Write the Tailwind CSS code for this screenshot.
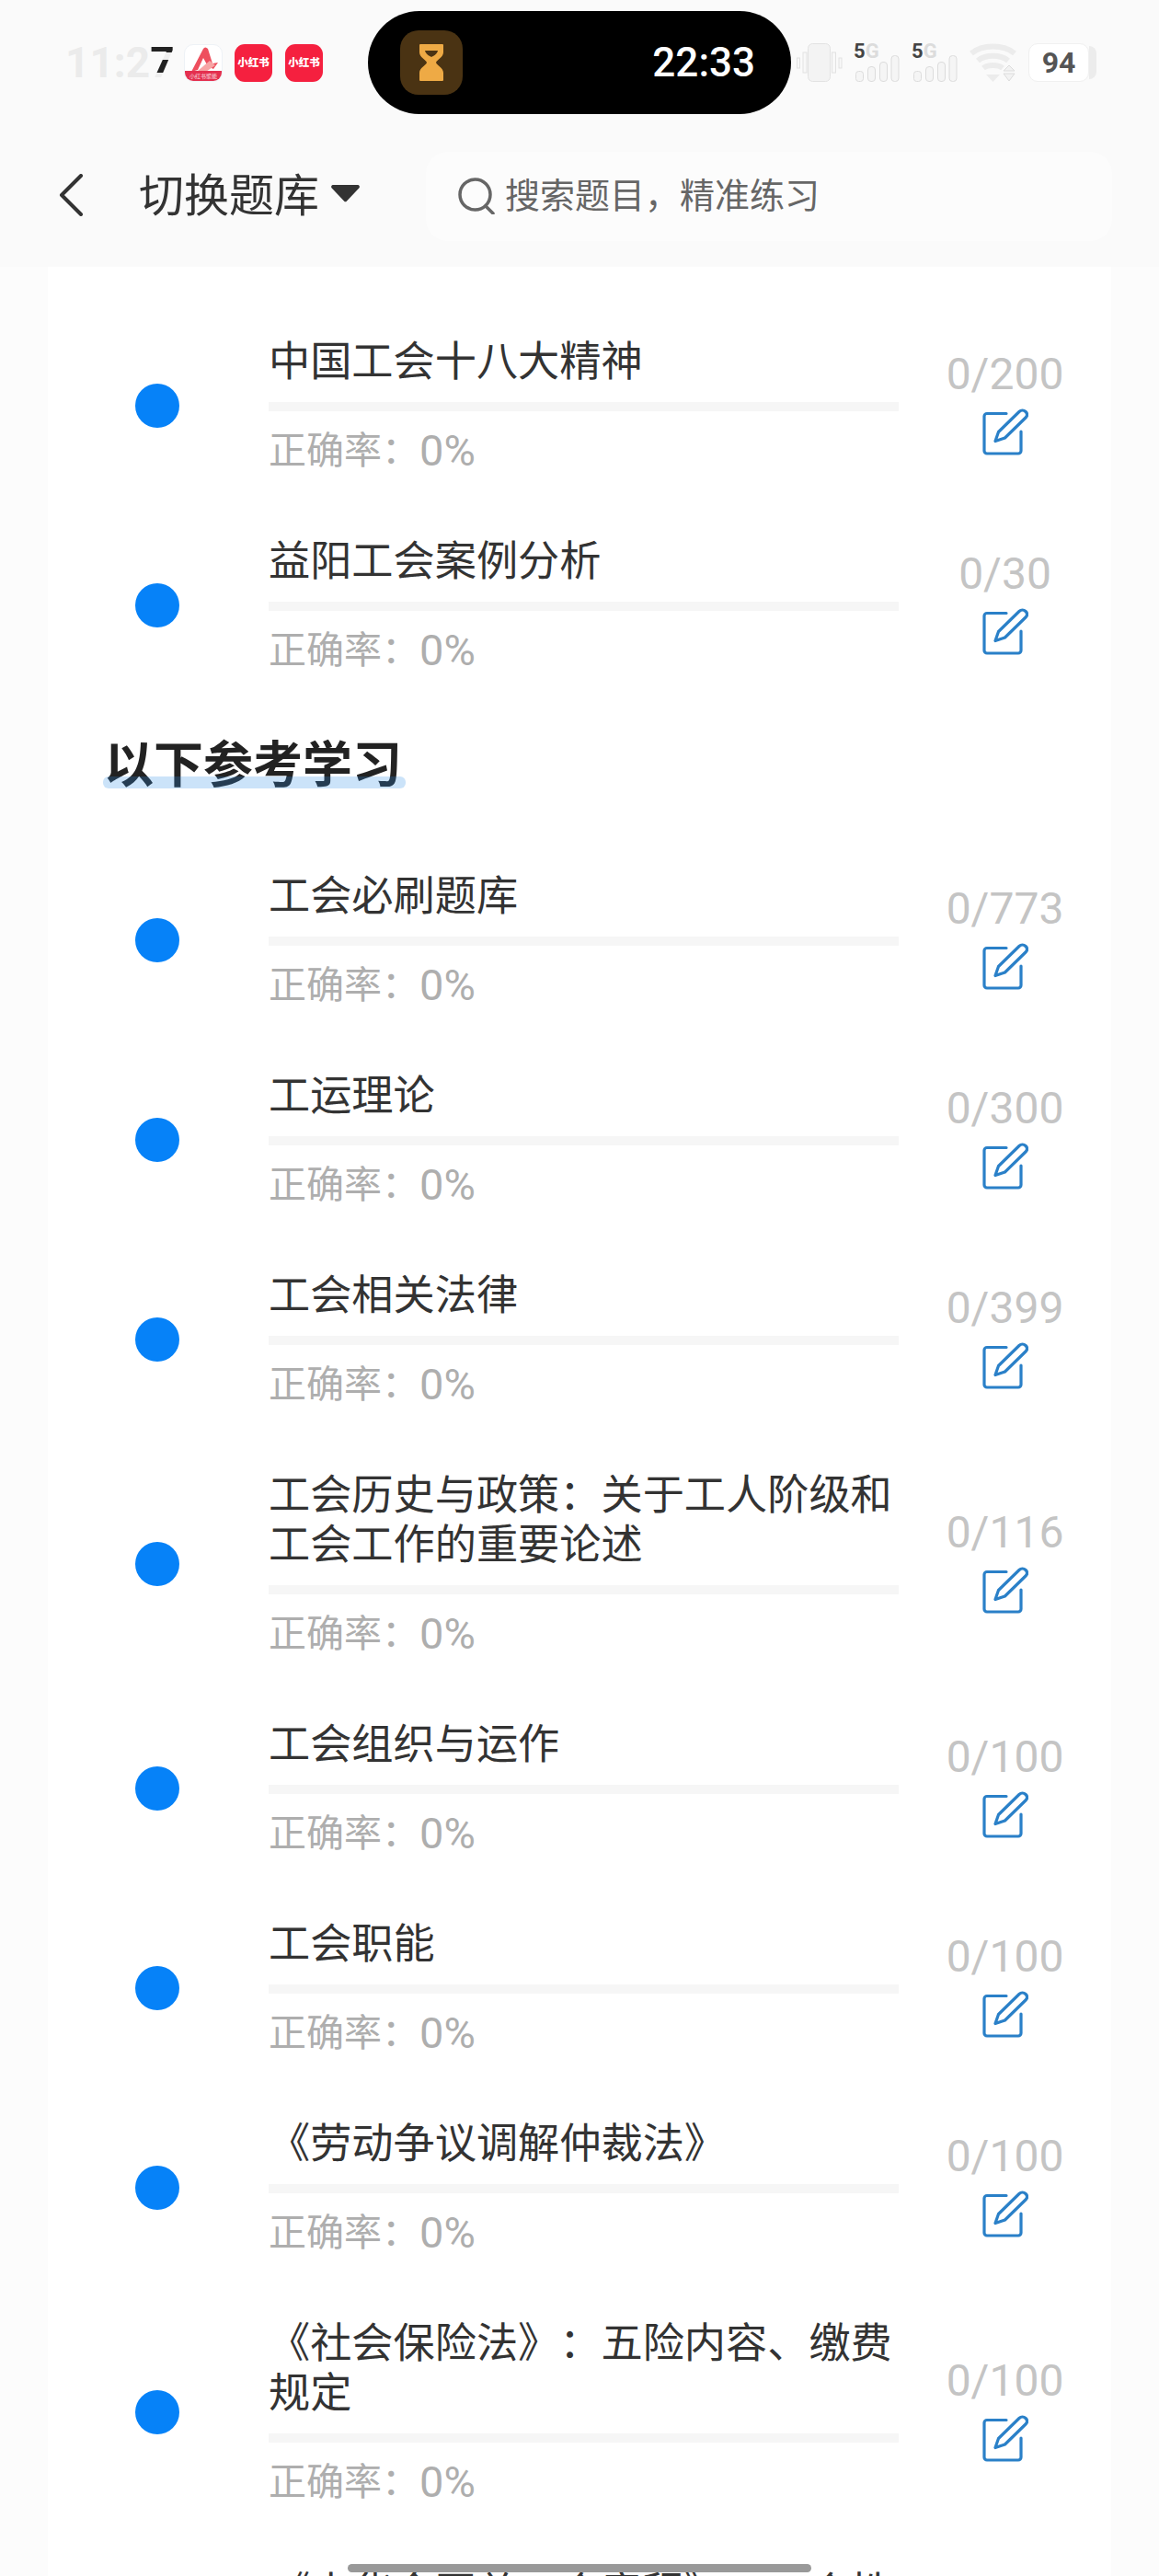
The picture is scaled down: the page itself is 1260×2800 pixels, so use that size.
<!DOCTYPE html>
<html lang="zh-CN">
<head>
<meta charset="UTF-8">
<meta name="viewport" content="width=device-width, initial-scale=1.0">
<title>切换题库</title>
<script src="https://cdn.jsdelivr.net/npm/@tailwindcss/browser@4"></script>
</head>
<body class="bg-[#fcfcfc] font-['Roboto','Noto_Sans_CJK_SC',sans-serif] [text-spacing-trim:space-all]">
<div class="relative w-[1260px] h-[2800px] overflow-hidden">

  <!-- Top: status bar + nav -->
  <header class="h-[290px] bg-[#fafafa] flex flex-col">
    <div class="h-[136px] flex items-center pl-[71px]">
      <div class="w-[109px] text-[46px] leading-none font-bold whitespace-nowrap text-[#ebebeb]">11:2<span class="bg-[linear-gradient(180deg,#222_0%,#222_30%,#eee_30%,#eee_45%,#222_45%,#222_70%,#eee_70%,#eee_85%,#222_85%)] bg-clip-text text-transparent">7</span></div>
      <!-- app icons -->
      <div class="ml-[20px] w-[42px] h-[41px] rounded-[10px] bg-white relative overflow-hidden flex flex-col justify-end border border-[#eef2f6]">
        <svg viewBox="0 0 42 41" class="absolute inset-0 w-[42px] h-[41px]"><path d="M7 29 L20 4 Q22 1 25 4 L30 20 L36 19 L31 26 L25 23 L20 14 L14 27 Z" fill="#ee4f5e"/><path d="M14 28 L27 17 L33 22 L20 31 Z" fill="#f7a5a5"/></svg>
        <div class="relative h-[11px] bg-[#e4304f] text-white/80 text-[6px] leading-[11px] text-center whitespace-nowrap">小红书聚能</div>
      </div>
      <div class="ml-[13px] w-[41px] h-[41px] rounded-[11px] bg-[#f5203f] text-white text-[11.5px] font-black leading-[41px] text-center whitespace-nowrap">小红书</div>
      <div class="ml-[14px] w-[41px] h-[41px] rounded-[11px] bg-[#f5203f] text-white text-[11.5px] font-black leading-[41px] text-center whitespace-nowrap">小红书</div>
      <!-- pill -->
      <div class="ml-[49px] w-[460px] h-[112px] rounded-full bg-black flex items-center pl-[35px] pr-[39px] justify-between">
        <div class="w-[68px] h-[70px] rounded-[20px] bg-[#4a3313] flex items-center justify-center">
          <svg viewBox="0 0 26 40" class="w-[26px] h-[40px]"><path d="M1 0 H25 a1 1 0 0 1 1 1 V9 C26 14 19 17 18 20 C19 23 26 26 26 31 V39 a1 1 0 0 1 -1 1 H1 a1 1 0 0 1 -1 -1 V31 C0 26 7 23 8 20 C7 17 0 14 0 9 V1 a1 1 0 0 1 1 -1 Z" fill="#eeaa45"/><path d="M6 7 H20 C19 11 15 13 13 14 C11 13 7 11 6 7 Z" fill="#4a3313"/></svg>
        </div>
        <div class="text-white text-[44px] font-medium leading-none">22:33</div>
      </div>
      <!-- vibrate -->
      <svg viewBox="0 0 50 42" class="ml-[6px] w-[50px] h-[42px]"><rect x="12.5" y="0.5" width="24" height="41" rx="5" fill="#f3f3f3" stroke="#e2e2e2"/><rect x="7" y="10" width="4" height="22" fill="#f8f8f8" stroke="#e2e2e2"/><rect x="38.5" y="10" width="4" height="22" fill="#f8f8f8" stroke="#e2e2e2"/><rect x="0.5" y="16" width="3" height="11" fill="#f8f8f8" stroke="#e2e2e2"/><rect x="46" y="16" width="3" height="11" fill="#f8f8f8" stroke="#e2e2e2"/></svg>
      <!-- signal 1 -->
      <div class="ml-[12px] relative w-[50px] h-[42px]">
        <svg viewBox="0 0 50 42" class="w-[50px] h-[42px]"><g fill="#f5f5f5" stroke="#dcdcdc"><rect x="2.5" y="30.5" width="8" height="11" rx="3"/><rect x="15.5" y="25.5" width="8" height="16" rx="3.5"/><rect x="28.5" y="20.5" width="8" height="21" rx="3.5"/><rect x="41" y="13.5" width="8" height="28" rx="3.5"/></g></svg>
        <div class="absolute left-0 top-0 text-[22px] leading-[18px] font-bold text-[#dcdcdc]"><span class="text-[#444]">5</span>G</div>
      </div>
      <!-- signal 2 -->
      <div class="ml-[13px] relative w-[50px] h-[42px]">
        <svg viewBox="0 0 50 42" class="w-[50px] h-[42px]"><g fill="#f5f5f5" stroke="#dcdcdc"><rect x="2.5" y="30.5" width="8" height="11" rx="3"/><rect x="15.5" y="25.5" width="8" height="16" rx="3.5"/><rect x="28.5" y="20.5" width="8" height="21" rx="3.5"/><rect x="41" y="13.5" width="8" height="28" rx="3.5"/></g></svg>
        <div class="absolute left-0 top-0 text-[22px] leading-[18px] font-bold text-[#dcdcdc]"><span class="text-[#444]">5</span>G</div>
      </div>
      <!-- wifi -->
      <svg viewBox="0 0 54 42" class="ml-[12px] w-[54px] h-[42px]"><g fill="none" stroke="#ececec" stroke-width="6"><path d="M3 11 C15 1 38 1 50 11"/><path d="M10 19 C18 12 35 12 43 19"/><path d="M16 27 C21 23 32 23 37 27"/></g><path d="M19 34 H34 L26.5 42 Z" fill="#ececec"/><path d="M38 30 L44 24 L50 30 Z" fill="#f2f2f2" stroke="#dcdcdc"/><path d="M38 33 H50 L44 41 Z" fill="#f2f2f2" stroke="#dcdcdc"/></svg>
      <!-- battery -->
      <div class="ml-[11px] flex items-center">
        <div class="w-[66px] h-[42px] bg-white rounded-[10px] border border-[#f0f0f0] flex items-center justify-center text-[32px] leading-none font-bold text-[#555]">94</div>
        <div class="w-[8px] h-[36px] bg-[#ececec] rounded-r-full"></div>
      </div>
    </div>

    <nav class="h-[154px] flex items-center pl-[64px]">
      <svg viewBox="0 0 26 46" class="w-[26px] h-[46px] -mt-[3px]"><path d="M24 2 L3 23 L24 44" fill="none" stroke="#333" stroke-width="4" stroke-linecap="round" stroke-linejoin="round"/></svg>
      <div class="ml-[61px] w-[195px] text-[49px] leading-none text-[#333] whitespace-nowrap">切换题库</div>
      <svg viewBox="0 0 33 20" class="ml-[13px] w-[33px] h-[20px] -mt-[6px]"><path d="M3 1 H30 a2 2 0 0 1 1.5 3.2 L18 18.5 a2 2 0 0 1 -3 0 L1.5 4.2 A2 2 0 0 1 3 1 Z" fill="#333"/></svg>
      <div class="ml-[71px] w-[746px] h-[97px] rounded-[24px] bg-[#fcfcfc] flex items-center pl-[35px]">
        <svg viewBox="0 0 40 40" class="w-[40px] h-[40px]"><circle cx="18.5" cy="18.5" r="16.5" fill="none" stroke="#666" stroke-width="3.5"/><path d="M30 31 L38 39" stroke="#666" stroke-width="3.5" stroke-linecap="round"/></svg>
        <span class="ml-[11px] text-[38px] leading-none text-[#666] whitespace-nowrap">搜索题目，精准练习</span>
      </div>
    </nav>
  </header>

  <!-- Card -->
  <main class="ml-[52px] w-[1156px] bg-white pt-[42px]">
    <div id="top-rows"></div>
    <div class="h-[147px] pl-[61px] pt-[37px]">
      <div class="relative inline-block text-[54px] leading-[60px] font-bold text-[#222]">以下参考学习
        <span class="absolute -left-[1px] -right-[4px] top-[41px] h-[13px] rounded-md bg-[#2f8fe8]/25"></span>
      </div>
    </div>
    <div id="rows"></div>
  </main>

  <!-- Home bar over the content -->
  <div class="absolute left-[378px] top-[2787px] w-[504px] h-[9px] rounded-full bg-[#999]"></div>
</div>

<script>
const topRows = [
  { title: "中国工会十八大精神", total: 200 },
  { title: "益阳工会案例分析", total: 30 },
];
const rows = [
  { title: "工会必刷题库", total: 773 },
  { title: "工运理论", total: 300 },
  { title: "工会相关法律", total: 399 },
  { title: "工会历史与政策：关于工人阶级和工会工作的重要论述", total: 116 },
  { title: "工会组织与运作", total: 100 },
  { title: "工会职能", total: 100 },
  { title: "《劳动争议调解仲裁法》", total: 100 },
  { title: "《社会保险法》：五险内容、缴费规定", total: 100 },
  { title: "《中华全国总工会章程》：工会性质与基本任务", total: 100 },
];

function rowHtml(r) {
  return `
    <div class="flex items-center pl-[95px]">
      <div class="w-[48px] h-[48px] rounded-full bg-[#0682f8] shrink-0"></div>
      <div class="ml-[97px] w-[685px] shrink-0 pt-[35px] pb-[32px]">
        <div class="text-[45.2px] leading-[54px] text-[#333]">${r.title}</div>
        <div class="mt-[16px] h-[10px] bg-[#f6f6f6]"></div>
        <div class="mt-[16px] h-[54px] flex items-center text-[41px] leading-[54px] text-[#aeaeae]">正确率：<span class="text-[47px] leading-[54px]">0%</span></div>
      </div>
      <div class="flex-1 flex flex-col items-center pb-[9px]">
        <div class="text-[48px] leading-[58px] text-[#c4c4c4]">0/${r.total}</div>
        <svg viewBox="9 8 50 51" class="mt-[8px] w-[50px] h-[51px]" fill="none" stroke="#2a80c8" stroke-width="3.2" stroke-linejoin="round" stroke-linecap="round">
          <path d="M35 13.5 H14 a3 3 0 0 0 -3 3 V54 a3 3 0 0 0 3 3 H48 a3 3 0 0 0 3 -3 V33"/>
          <path d="M23 43.5 L26.5 33.5 L49 11.5 C51 9.5 54 9.5 56 11.5 C58 13.5 58 16 56 18 L33.5 40 Z"/>
        </svg>
      </div>
    </div>`;
}

document.getElementById("top-rows").innerHTML = topRows.map(rowHtml).join("");
document.getElementById("rows").innerHTML = rows.map(rowHtml).join("");
</script>
</body>
</html>
